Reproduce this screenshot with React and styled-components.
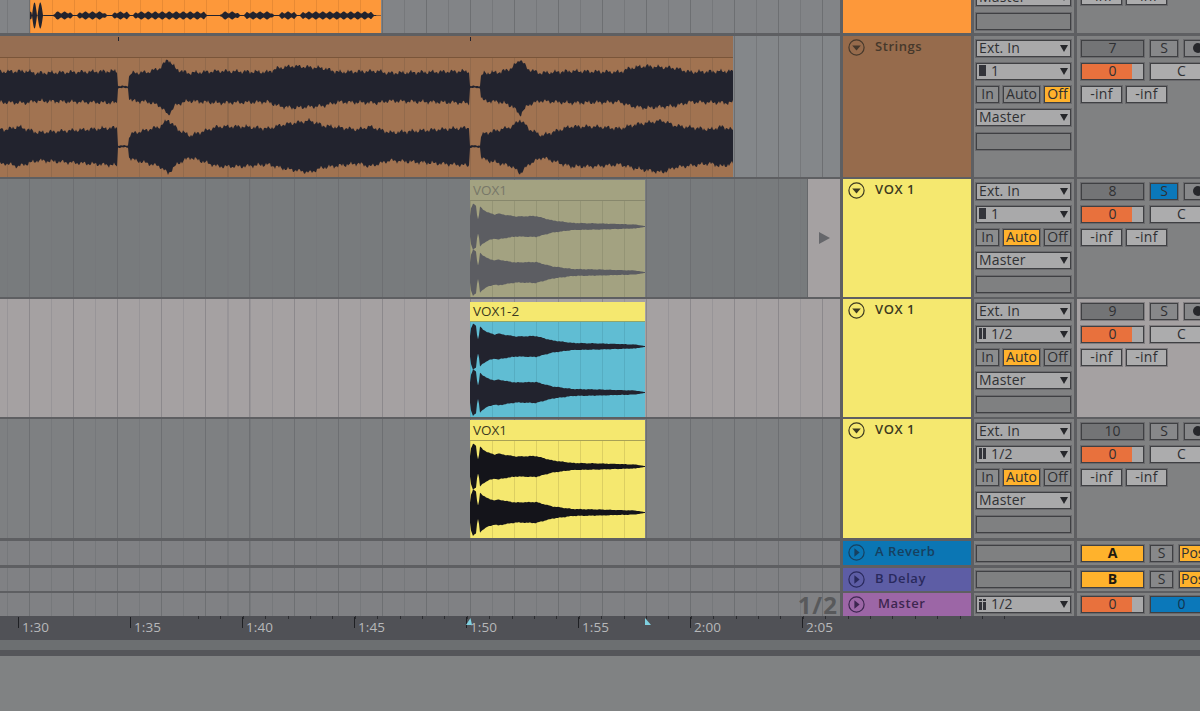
import React from "react";
import styled, { createGlobalStyle } from "styled-components";

// waveform helpers
const interp = (pts, x) => {
	if (x <= pts[0][0]) return pts[0][1];
	for (let i = 1; i < pts.length; i++) {
		if (x <= pts[i][0]) {
			const [x0, y0] = pts[i - 1];
			const [x1, y1] = pts[i];
			return y0 + ((y1 - y0) * (x - x0)) / (x1 - x0);
		}
	}
	return pts[pts.length - 1][1];
};
const wobble = (x, s) =>
	Math.sin(x * 1.7 + s) * 0.4 +
	Math.sin(x * 0.61 + s * 2) * 0.4 +
	Math.sin(x * 3.1 + s * 3) * 0.2;

const wavePath = (ampAt, cy, from, to, jitter, seed, step = 1) => {
	const top = [];
	const bottom = [];
	for (let x = from; x <= to; x += step) {
		const a = ampAt(x);
		top.push(`${x} ${(cy - Math.max(0.3, a + wobble(x, seed) * jitter * Math.min(1, a / 4))).toFixed(1)}`);
		bottom.push(`${x} ${(cy + Math.max(0.3, a + wobble(x, seed + 1.3) * jitter * Math.min(1, a / 4))).toFixed(1)}`);
	}
	return `M${top.join("L")}L${bottom.reverse().join("L")}Z`;
};

const decay = [
	[0, 10], [1, 18], [3, 23], [6, 21], [7.5, 7], [8.5, 7], [10, 20], [13, 17], [18, 14], [25, 12], [28, 13],
	[36, 11.5], [46, 10], [66, 10.5], [75, 8], [83, 6], [103, 3.5], [130, 3], [165, 2], [175, 0.4],
];
const stringsTop = [
	[0, 1], [10, 1], [10.5, 10], [14, 14], [30, 15], [42, 19], [50, 28], [58, 18], [70, 14], [100, 16],
	[150, 15], [160, 19], [175, 21], [205, 19], [220, 15], [260, 16], [270, 14], [351, 16], [352, 1],
];
const stringsBottom = [
	[0, 1], [10, 1], [10.5, 10], [14, 13], [30, 17], [42, 20], [50, 27], [60, 17], [72, 11], [100, 20],
	[125, 20], [150, 18], [165, 22], [192, 26], [205, 21], [240, 17], [252, 20], [272, 14], [351, 19], [352, 1],
];
const stringsAmp = (env) => (x) => {
	const p = (x + 234) % 352;
	return interp(env, p);
};
const blips = (x) => {
	const p = (x + 167 * 4 - 53) % 167;
	const seg = [
		[0, 20], [24, 54], [59, 77], [80, 154],
	].find(([a, b]) => p >= a && p <= b);
	if (!seg) return 0.6;
	const edge = Math.min(p - seg[0], seg[1] - p);
	return 0.6 + Math.min(edge, 3.2) * (0.75 + 0.3 * Math.sin(x * 0.9));
};
const burstAmp = (x) => {
	if (x >= 2 && x <= 7) return 13 * Math.sin(((x - 2) / 5) * Math.PI);
	if (x >= 7.5 && x <= 13) return 13 * Math.sin(((x - 7.5) / 5.5) * Math.PI);
	if (x > 346) return 0.3;
	return blips(x + 30);
};

const TRACKS = [
	{ name: "", color: "#fd983a", ink: "#000", height: 33, gap: 3, kind: "cut", lane: "#828487" },
	{ name: "Strings", color: "#966b4c", ink: "#46382b", height: 141, gap: 2, num: "7", mono: true, mode: "Off", lane: "#84878a" },
	{ name: "VOX 1", color: "#f5e86f", ink: "#3c3920", height: 118, gap: 2, num: "8", mono: true, mode: "Auto", solo: true, lane: "#787b7d" },
	{ name: "VOX 1", color: "#f5e86f", ink: "#3c3920", height: 118, gap: 2, num: "9", mode: "Auto", lane: "#a5a1a2", light: true },
	{ name: "VOX 1", color: "#f5e86f", ink: "#3c3920", height: 119, gap: 3, num: "10", mode: "Auto", lane: "#7e8082" },
];

const GlobalStyle = createGlobalStyle`
	html, body {
		margin: 0;
		padding: 0;
		background: #808283;
		overflow: hidden;
	}
	* {
		box-sizing: border-box;
	}
`;

function Fold({ open, ink }) {
	return (
		<FoldIcon width="17" height="17" viewBox="0 0 17 17">
			<circle cx="8.5" cy="8.5" r="7.6" fill="none" stroke={ink} strokeWidth="1.2" />
			{open ? (
				<polygon points="4.2,6.6 12.8,6.6 8.5,11.6" fill={ink} />
			) : (
				<polygon points="6.4,4.2 6.4,12.8 11.6,8.5" fill={ink} />
			)}
		</FoldIcon>
	);
}

function Title({ track, open = true }) {
	return (
		<TitleCell $bg={track.color} $ink={track.ink}>
			{track.name && <Fold open={open} ink={track.ink} />}
			{track.name && <TitleText $shift={track.shift}>{track.name}</TitleText>}
		</TitleCell>
	);
}

function Channel({ bars, dotted, label }) {
	return (
		<Drop>
			<Bars>
				{bars === 1 && <Bar $w={7} />}
				{bars === 2 && (
					<>
						<Bar $w={3} $dotted={dotted} />
						<Bar $w={3} $dotted={dotted} />
					</>
				)}
			</Bars>
			<span>{label}</span>
		</Drop>
	);
}

function Inputs({ track }) {
	return (
		<InputCell>
			<Drop>Ext. In</Drop>
			<Channel bars={track.mono ? 1 : 2} label={track.mono ? "1" : "1/2"} />
			<ModeRow>
				<Mode $w={23}>In</Mode>
				<Mode $w={37} $on={track.mode === "Auto"}>Auto</Mode>
				<Mode $w={27} $on={track.mode === "Off"}>Off</Mode>
			</ModeRow>
			<Drop>Master</Drop>
			<Blank />
		</InputCell>
	);
}

function Mixer({ track }) {
	return (
		<MixerCell $light={track.light}>
			<MixRow>
				<NumBtn>{track.num}</NumBtn>
				<SmallBtn $w={28} $solo={track.solo}>S</SmallBtn>
				<RecBtn><RecDot /></RecBtn>
			</MixRow>
			<MixRow>
				<Pan>0</Pan>
				<Center>C</Center>
			</MixRow>
			<InfRow>
				<Inf>-inf</Inf>
				<Inf>-inf</Inf>
			</InfRow>
		</MixerCell>
	);
}

function VoxClip({ title, tone, top }) {
	const w = 175;
	return (
		<Clip $left={470} $width={w} $top={top} $bg={tone.body}>
			<ClipHead $bg={tone.head} $ink={tone.ink} $rule={tone.rule} $h={tone.headH}>{title}</ClipHead>
			<ClipBody $line={tone.line} $offset={0}>
				<svg width={w} height="96" viewBox={`0 0 ${w} 96`} style={{ display: "block" }}>
					<path d={wavePath((x) => interp(decay, x), tone.mid, 0, w, 0.5, 1)} fill={tone.wave} />
					<path d={wavePath((x) => interp(decay, x), tone.mid + 46, 0, w, 0.5, 2)} fill={tone.wave} />
				</svg>
			</ClipBody>
		</Clip>
	);
}

function Arrangement({ index }) {
	if (index === 0) {
		return (
			<Clip $left={30} $width={351} $top={0} $bg="#fd983a">
				<ClipBody $line="#e88a34" $offset={0}>
					<svg width="351" height="33" viewBox="0 0 351 33" style={{ display: "block" }}>
						<path d={wavePath(burstAmp, 15.5, 0, 351, 0, 1, 0.5)} fill="#22232e" />
					</svg>
				</ClipBody>
			</Clip>
		);
	}
	if (index === 1) {
		return (
			<Clip $left={0} $width={733} $top={0} $bg="#a17351">
				<ClipHead $bg="#966e52" $ink="transparent" $rule="#7a5539" $h={22}>
					<Notch $left={118} />
					<Notch $left={470} />
				</ClipHead>
				<ClipBody $line="#926a4c" $offset={7.3}>
					<svg width="733" height="119" viewBox="0 0 733 119" style={{ display: "block" }}>
						<path d={wavePath(stringsAmp(stringsTop), 29, 0, 733, 3, 1)} fill="#22232e" />
						<path d={wavePath(stringsAmp(stringsBottom), 88.5, 0, 733, 3, 4)} fill="#22232e" />
					</svg>
				</ClipBody>
			</Clip>
		);
	}
	if (index === 2) {
		return (
			<>
				<VoxClip
					title="VOX1"
					top={1}
					tone={{ head: "#a3a281", body: "#a3a281", ink: "#777768", rule: "#87876c", line: "#949475", wave: "#5c5d62", headH: 21, mid: 25.5 }}
				/>
				<SlotArrow>
					<svg width="11" height="12" viewBox="0 0 11 12">
						<polygon points="0,0 11,6 0,12" fill="#66676b" />
					</svg>
				</SlotArrow>
			</>
		);
	}
	if (index === 3) {
		return (
			<VoxClip
				title="VOX1-2"
				top={3}
				tone={{ head: "#f5e86f", body: "#60bdd3", ink: "#3c3920", rule: "#8fa56b", line: "#56adc2", wave: "#22232e", headH: 20, mid: 24.5 }}
			/>
		);
	}
	return (
		<VoxClip
			title="VOX1"
			top={1}
			tone={{ head: "#f5e86f", body: "#f5e86f", ink: "#3c3920", rule: "#a8a155", line: "#dccf62", wave: "#14141a", headH: 21, mid: 25.5 }}
		/>
	);
}

export default function App() {
	return (
		<>
			<GlobalStyle />
			<Page>
				<Tracks>
					{TRACKS.map((track, i) => (
						<Row key={i} $height={track.height} $gap={track.gap}>
							<Lane $bg={track.lane} $light={track.light}>
								<Arrangement index={i} />
							</Lane>
							<Title track={track} />
							{track.kind === "cut" ? (
								<CutInput>
									<Drop>Master</Drop>
									<Blank />
								</CutInput>
							) : (
								<Inputs track={track} />
							)}
							{track.kind === "cut" ? (
								<CutMixer>
									<InfRow>
										<Inf>-inf</Inf>
										<Inf>-inf</Inf>
									</InfRow>
								</CutMixer>
							) : (
								<Mixer track={track} />
							)}
						</Row>
					))}

					<Row $height={24} $gap={3}>
						<Lane $bg="#808184" />
						<Title open={false} track={{ name: "A Reverb", color: "#0b76b4", ink: "#17405f" }} />
						<ReturnInput><Blank /></ReturnInput>
						<MixerCell $tight>
							<MixRow>
								<SendBtn>A</SendBtn>
								<SmallBtn $w={23}>S</SmallBtn>
								<PostBtn>Pos</PostBtn>
							</MixRow>
						</MixerCell>
					</Row>
					<Row $height={23} $gap={2}>
						<Lane $bg="#808184" />
						<Title open={false} track={{ name: "B Delay", color: "#5d5da5", ink: "#29295c" }} />
						<ReturnInput><Blank /></ReturnInput>
						<MixerCell $tight>
							<MixRow>
								<SendBtn>B</SendBtn>
								<SmallBtn $w={23}>S</SmallBtn>
								<PostBtn>Pos</PostBtn>
							</MixRow>
						</MixerCell>
					</Row>
					<Row $height={23} $gap={0}>
						<Lane $bg="#808184">
							<Ratio>1/2</Ratio>
						</Lane>
						<Title open={false} track={{ name: "Master", color: "#9c66a6", ink: "#3d2650", shift: 3 }} />
						<ReturnInput>
							<Channel bars={2} dotted label="1/2" />
						</ReturnInput>
						<MixerCell $tight>
							<MixRow>
								<Pan>0</Pan>
								<BluePan>0</BluePan>
							</MixRow>
						</MixerCell>
					</Row>
				</Tracks>

				<Ruler>
					{["1:30", "1:35", "1:40", "1:45", "1:50", "1:55", "2:00", "2:05"].map((t) => (
						<Stamp key={t}>{t}</Stamp>
					))}
					<Marker $left={466}>
						<svg width="6" height="7" viewBox="0 0 6 7">
							<polygon points="0,7 6,7 4.5,0" fill="#7fd0e0" />
						</svg>
					</Marker>
					<Marker $left={645}>
						<svg width="6" height="7" viewBox="0 0 6 7">
							<polygon points="0,0 0,7 6,7" fill="#7fd0e0" />
						</svg>
					</Marker>
				</Ruler>
				<Strip />
				<DarkBand />
				<Bottom />
			</Page>
		</>
	);
}

const UI_FONT = `"Open Sans", "Noto Sans", "Liberation Sans", sans-serif`;

const Page = styled.div`
	width: 1200px;
	height: 711px;
	display: flex;
	flex-direction: column;
	overflow: hidden;
	background: #808283;
	font-family: ${UI_FONT};
`;
const Tracks = styled.div`
	display: flex;
	flex-direction: column;
	background: #5e5f62;
`;
const Row = styled.div`
	display: grid;
	grid-template-columns: 840px 128px 100px 123px;
	column-gap: 3px;
	height: ${(p) => p.$height}px;
	margin-bottom: ${(p) => p.$gap}px;
	flex: none;
`;
const Lane = styled.div`
	position: relative;
	display: flex;
	justify-content: flex-end;
	overflow: hidden;
	background-color: ${(p) => p.$bg};
	background-image:
		repeating-linear-gradient(90deg, ${(p) => (p.$light ? "#8c898c" : "#6d6f72")} 29.3px 30.3px, transparent 30.3px 73.34px),
		repeating-linear-gradient(90deg, ${(p) => (p.$light ? "#989598" : "#76787b")} 7.3px 8.3px, transparent 8.3px 29.32px);
`;
const Clip = styled.div`
	position: absolute;
	left: ${(p) => p.$left}px;
	top: ${(p) => p.$top}px;
	bottom: 0;
	width: ${(p) => p.$width}px;
	display: flex;
	flex-direction: column;
	background: ${(p) => p.$bg};
`;
const ClipHead = styled.div`
	position: relative;
	flex: none;
	height: ${(p) => p.$h}px;
	padding-left: 3px;
	line-height: ${(p) => p.$h - 1}px;
	font-size: 13.5px;
	color: ${(p) => p.$ink};
	background: ${(p) => p.$bg};
	border-bottom: 1px solid ${(p) => p.$rule};
`;
const Notch = styled.i`
	position: absolute;
	left: ${(p) => p.$left}px;
	top: 1px;
	width: 1px;
	height: 4px;
	background: #22232e;
`;
const ClipBody = styled.div`
	flex: 1;
	min-height: 0;
	overflow: hidden;
	background-image: repeating-linear-gradient(
		90deg,
		${(p) => p.$line} ${(p) => p.$offset}px ${(p) => p.$offset + 1}px,
		transparent ${(p) => p.$offset + 1}px ${(p) => p.$offset + 22.02}px
	);
`;
const SlotArrow = styled.div`
	position: absolute;
	right: 0;
	top: 0;
	bottom: 0;
	width: 33px;
	display: flex;
	align-items: center;
	justify-content: center;
	background: #a5a1a2;
	border-left: 1px solid #66686b;
`;
const Ratio = styled.div`
	align-self: center;
	height: 19px;
	padding-right: 2px;
	font-size: 24px;
	font-weight: 700;
	letter-spacing: 1px;
	line-height: 19px;
	color: #58595b;
`;
const TitleCell = styled.div`
	display: flex;
	align-items: flex-start;
	gap: 10px;
	padding: 3px 0 0 5px;
	overflow: hidden;
	background: ${(p) => p.$bg};
	color: ${(p) => p.$ink};
`;
const FoldIcon = styled.svg`
	flex: none;
	display: block;
`;
const TitleText = styled.div`
	margin-left: ${(p) => p.$shift || 0}px;
	font-size: 13px;
	font-weight: 600;
	letter-spacing: 0.55px;
	line-height: 14px;
`;
const InputCell = styled.div`
	display: flex;
	flex-direction: column;
	gap: 6.25px;
	padding: 3.5px 3px 0 2px;
	overflow: hidden;
	background: #808182;
`;
const CutInput = styled(InputCell)`
	justify-content: flex-end;
	padding-top: 0;
	padding-bottom: 3.5px;
`;
const ReturnInput = styled(InputCell)`
	justify-content: center;
	padding-top: 0;
`;
const control = `
	flex: none;
	height: 17px;
	border: 1px solid #3f4043;
	box-shadow: 0 0 0 1px rgba(72, 73, 77, 0.4);
	font-size: 14px;
	line-height: 14px;
	color: #2f3033;
	white-space: nowrap;
`;
const Drop = styled.div`
	${control}
	position: relative;
	display: flex;
	align-items: center;
	padding: 0 0 1px 2px;
	letter-spacing: 0.15px;
	background: #a9a9aa;
	&::after {
		content: "";
		position: absolute;
		right: 2px;
		top: 4px;
		border-left: 4.5px solid transparent;
		border-right: 4.5px solid transparent;
		border-top: 7px solid #26272b;
	}
`;
const Bars = styled.span`
	display: inline-flex;
	gap: 1px;
	width: 12px;
	flex: none;
`;
const Bar = styled.i`
	display: block;
	width: ${(p) => p.$w}px;
	height: 11px;
	background: ${(p) =>
		p.$dotted
			? "linear-gradient(#33343a 0 2px, transparent 2px 3px, #33343a 3px 11px)"
			: "#33343a"};
`;
const ModeRow = styled.div`
	display: flex;
	justify-content: space-between;
	flex: none;
`;
const Mode = styled.div`
	${control}
	width: ${(p) => p.$w}px;
	text-align: center;
	background: ${(p) => (p.$on ? "#ffb22c" : "#8c8d8e")};
`;
const Blank = styled.div`
	${control}
	background: #7f8081;
`;
const MixerCell = styled.div`
	display: flex;
	flex-direction: column;
	justify-content: ${(p) => (p.$tight ? "center" : "flex-start")};
	gap: 6.25px;
	padding: ${(p) => (p.$tight ? "0 0 0 4px" : "3.5px 0 0 4px")};
	overflow: hidden;
	background: ${(p) => (p.$light ? "#a5a1a2" : "#808182")};
`;
const CutMixer = styled(MixerCell)`
	justify-content: flex-end;
	padding-bottom: 28px;
`;
const MixRow = styled.div`
	display: flex;
	gap: 6px;
	flex: none;
	width: 160px;
`;
const InfRow = styled.div`
	display: flex;
	gap: 4px;
	flex: none;
`;
const cell = `
	${control}
	text-align: center;
`;
const NumBtn = styled.div`
	${cell}
	width: 63px;
	background: #737476;
`;
const SmallBtn = styled.div`
	${cell}
	width: ${(p) => p.$w}px;
	background: ${(p) => (p.$solo ? "#0b78ba" : "#87888a")};
`;
const RecBtn = styled.div`
	${cell}
	width: 40px;
	display: flex;
	align-items: center;
	padding-left: 8px;
	background: #87888a;
`;
const RecDot = styled.i`
	display: block;
	width: 10px;
	height: 10px;
	border-radius: 50%;
	background: #26272b;
`;
const Pan = styled.div`
	${cell}
	width: 63px;
	background: linear-gradient(90deg, #e8713d 82%, #a9a9aa 82%);
`;
const BluePan = styled.div`
	${cell}
	width: 63px;
	background: #0b78ba;
	color: #12334d;
`;
const Center = styled.div`
	${cell}
	width: 63px;
	background: #acacad;
`;
const Inf = styled.div`
	${cell}
	width: 41px;
	letter-spacing: 0.3px;
	background: #acacad;
`;
const SendBtn = styled.div`
	${cell}
	width: 63px;
	font-weight: 700;
	color: #1f1a10;
	background: #ffb22c;
`;
const PostBtn = styled.div`
	${control}
	width: 40px;
	padding-left: 1px;
	background: #ffb22c;
`;
const Ruler = styled.div`
	position: relative;
	flex: none;
	display: flex;
	height: 24px;
	padding-left: 18px;
	background:
		repeating-linear-gradient(90deg, #2c2d31 18px 19px, transparent 19px 40.4px) top / 840px 3px no-repeat,
		#505156;
`;
const Stamp = styled.div`
	position: relative;
	flex: none;
	width: 112px;
	padding: 4px 0 0 4px;
	font-size: 13.5px;
	line-height: 15px;
	letter-spacing: 0.1px;
	color: #b7b8ba;
	&::before {
		content: "";
		position: absolute;
		left: 0;
		top: 1px;
		width: 1px;
		height: 11px;
		background: #1f2024;
	}
`;
const Marker = styled.div`
	position: absolute;
	left: ${(p) => p.$left}px;
	top: 2px;
	line-height: 0;
`;
const Strip = styled.div`
	flex: none;
	height: 10px;
	background: #6c6f71;
`;
const DarkBand = styled.div`
	flex: none;
	height: 6px;
	background: #55565a;
`;
const Bottom = styled.div`
	flex: 1;
	background: #808283;
`;
